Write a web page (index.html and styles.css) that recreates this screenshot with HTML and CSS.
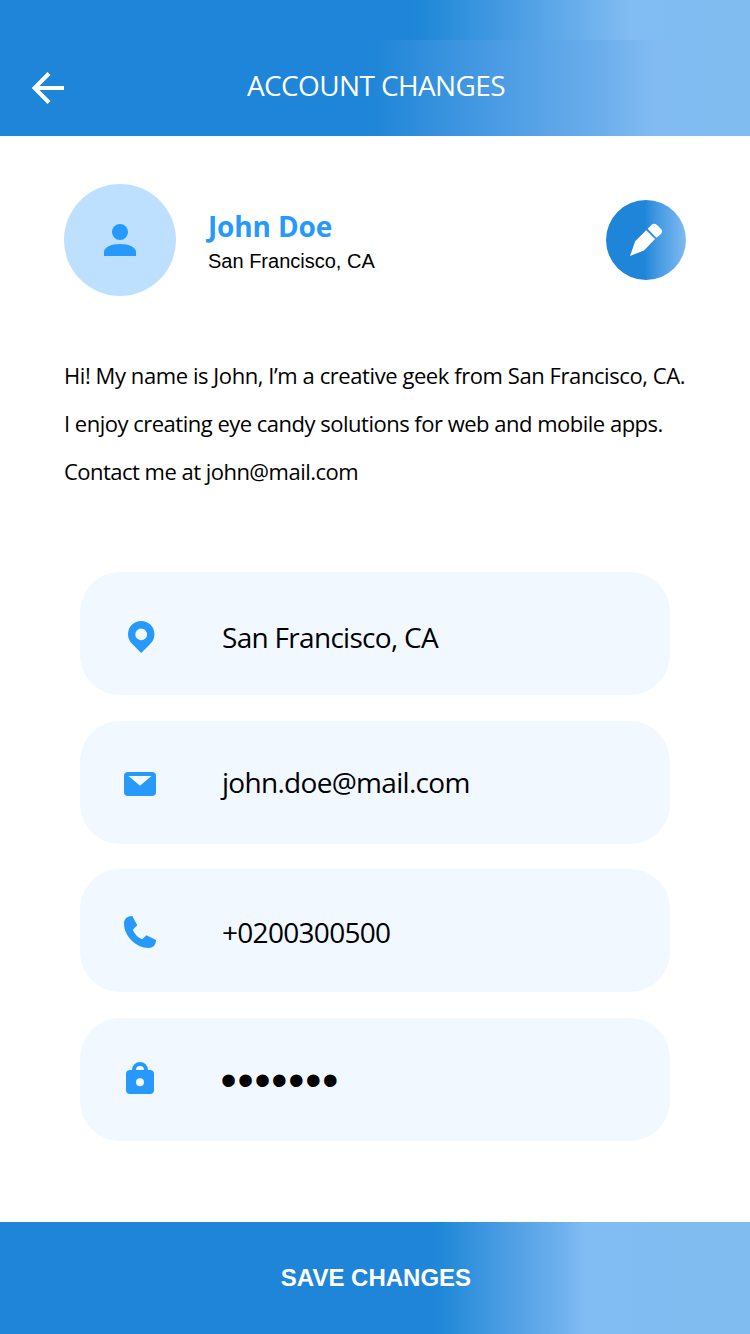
FILE: index.html
```html
<!DOCTYPE html>
<html lang="en">
<head>
<meta charset="utf-8">
<title>Account Changes</title>
<link rel="stylesheet" href="styles.css">
</head>
<body>
<div class="screen">
  <div class="status-bar"></div>
  <header class="app-bar">
    <svg class="back" viewBox="0 0 32 32"><path d="M32 16H3M17 1.5L2.5 16L17 30.5" fill="none" stroke="#fff" stroke-width="4"/></svg>
    <h1 class="title">ACCOUNT CHANGES</h1>
  </header>
  <main class="content">
    <section class="profile">
      <div class="avatar">
        <svg class="icon" viewBox="0 0 32 32"><circle cx="16" cy="8" r="8"/><path d="M0 32V28C0 23.5 7 20 16 20S32 23.5 32 28V32Z"/></svg>
      </div>
      <div class="identity">
        <h2 class="name">John Doe</h2>
        <p class="place">San Francisco, CA</p>
      </div>
      <button class="edit" aria-label="Edit">
        <svg class="pencil" viewBox="0 0 34 34"><path d="M1 33L6.200 18.200L17.200 7.200L26 16L15 27.500Z"/><path d="M18.600 5.800L22.800 1.700Q25.200 -.4 27.700 1.700L32 6Q34.200 8.500 32 11L27.500 14.700Z"/></svg>
      </button>
    </section>
    <p class="bio"><span class="line line-a">Hi! My name is John, I’m a creative geek from San Francisco, CA.</span><span class="line line-b">I enjoy creating eye candy solutions for web and mobile apps.</span><span class="line line-c">Contact me at john@mail.com</span></p>
    <section class="fields">
      <div class="field">
        <svg class="icon pin" viewBox="0 0 32 32"><path fill-rule="evenodd" d="M17.200 0A13.200 13.200 0 0 0 4 13.200C4 17 5.500 20.200 8 22.800L17.200 32L26.400 22.800C29 20.200 30.400 17 30.400 13.200A13.200 13.200 0 0 0 17.200 0ZM17.200 7.500A5.900 5.900 0 1 1 17.200 19.300A5.900 5.900 0 0 1 17.200 7.500Z"/></svg>
        <span class="value city">San Francisco, CA</span>
      </div>
      <div class="field">
        <svg class="icon mail" viewBox="0 0 32 32"><path fill-rule="evenodd" d="M4 4H28Q32 4 32 8V24Q32 28 28 28H4Q0 28 0 24V8Q0 4 4 4ZM4.500 8L16 17.800L27.500 8Z"/></svg>
        <span class="value email">john.doe@mail.com</span>
      </div>
      <div class="field">
        <svg class="icon phone" viewBox="0 0 32 32"><path d="M8.300 0L13.300 9.300L9 13.600C9.700 17.600 14.500 22.400 18.100 23.200L22.500 19.200L32 24C32 29 29 32 24.500 32C12 32 0 20 0 7.500C0 3 3 0 8.300 0Z"/></svg>
        <span class="value number">+0200300500</span>
      </div>
      <div class="field">
        <svg class="icon lock" viewBox="0 0 32 32"><path fill-rule="evenodd" d="M8 8A8 8 0 0 1 24 8H26Q30 8 30 12V28Q30 32 26 32H6Q2 32 2 28V12Q2 8 6 8ZM12 8H20A4 4 0 0 0 12 8ZM16 16.200A4 4 0 1 0 16 24.200A4 4 0 0 0 16 16.200Z"/></svg>
        <span class="value password">•••••••</span>
      </div>
    </section>
  </main>
  <button class="save">SAVE CHANGES</button>
</div>
</body>
</html>
```
FILE: styles.css
```css
* { box-sizing: border-box; margin: 0; padding: 0; }
body { background: #fff; color: #000; font-family: "Open Sans", "Noto Sans", sans-serif; }
button { border: 0; }
.screen { width: 750px; height: 1334px; display: flex; flex-direction: column; overflow: hidden; }
.status-bar { height: 40px; flex: none; background: linear-gradient(90deg, #1e85d9 410px, #2089d7 425px, #459ae2 503px, #81bcf2 630px, #80bcf0); }
.app-bar { height: 96px; flex: none; display: grid; grid-template-columns: 32px 1fr 32px; align-items: center; padding: 0 32px; background: linear-gradient(90deg, #1e85d9 360px, #2086d7 375px, #4398e2 476px, #6dafec 605px, #81bbf2 652px, #80bcf0); }
.back { width: 32px; height: 32px; }
.title { font-size: 28px; font-weight: 400; line-height: 36px; letter-spacing: -.62px; text-align: center; color: #fff; white-space: nowrap; padding: 0 0 6px 2px; }
.content { flex: 1; padding-top: 48px; }
.profile { height: 112px; padding: 0 64px; display: flex; align-items: center; }
.avatar { width: 112px; height: 112px; border-radius: 50%; background: #bde0ff; display: grid; place-items: center; }
.icon { width: 32px; height: 32px; fill: #2699fb; flex: none; display: block; }
.identity { margin-left: 32px; padding-top: 2px; flex: 1; white-space: nowrap; }
.name { font-size: 28px; line-height: 36px; font-weight: 700; color: #2699fb; letter-spacing: -.15px; }
.place { font: 20px/28px "Liberation Sans", Arial, sans-serif; margin-top: 3px; }
.edit { width: 80px; height: 80px; border-radius: 50%; display: grid; place-items: center; background: linear-gradient(90deg, #1e85d9 38px, #4197e1 50px, #7fbaf0 80px); }
.pencil { width: 34px; height: 34px; fill: #fff; }
.bio { margin: 55px 0 0 64px; font-size: 22px; line-height: 48px; white-space: nowrap; }
.line { display: block; width: max-content; }
.line-a { letter-spacing: -.425px; }
.line-b { letter-spacing: -.5px; }
.line-c { letter-spacing: -.52px; }
.fields { width: 590px; margin: 77px 0 0 80px; display: flex; flex-direction: column; gap: 25.700px; }
.field { height: 123px; border-radius: 40px; background: #f1f8ff; display: flex; align-items: center; padding-left: 44px; }
.value { margin-left: 66px; font-size: 28px; line-height: 40px; letter-spacing: -.7px; white-space: nowrap; }
.pin { margin-top: 7px; }
.mail { margin-top: 4px; }
.phone { margin-top: 3px; }
.lock { margin-bottom: 3px; }
.city { margin-top: 6px; }
.number { margin-top: 2px; }
.password { font: 46px/40px "Liberation Sans", Arial, sans-serif; letter-spacing: .85px; margin-left: 64.500px; }
.save { height: 112px; flex: none; padding-left: 2px; font: bold 24px/28px "Liberation Sans", Arial, sans-serif; color: #fff; text-align: center; background: linear-gradient(90deg, #1e85d9 432px, #2089d7 442px, #4398e1 491px, #6fb1ee 563px, #81bcf2 584px, #80bcf0); }
```
